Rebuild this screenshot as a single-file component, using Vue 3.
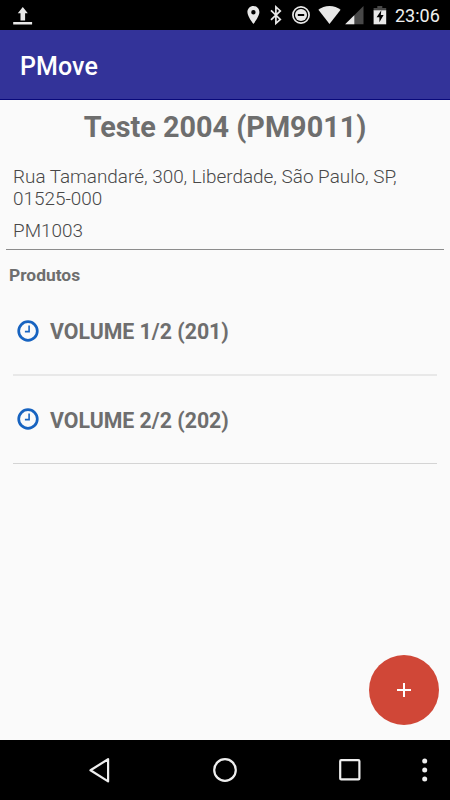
<script setup>
import { ref } from 'vue'

const pedido = {
  titulo: 'Teste 2004 (PM9011)',
  endereco: 'Rua Tamandaré, 300, Liberdade, São Paulo, SP, 01525-000',
  codigo: 'PM1003'
}

const produtos = ref([
  { id: 201, nome: 'VOLUME 1/2 (201)' },
  { id: 202, nome: 'VOLUME 2/2 (202)' }
])
</script>

<template>
  <div class="screen">
    <div class="status">
      <svg class="upload" width="20" height="30" viewBox="0 0 20 30">
        <path d="M9.8 7l5 6.2h-2.7v7.3H7.5v-7.3H4.8z M.2 22h18.9v2.6H.2z" />
      </svg>
      <div class="tray">
        <svg class="pin" width="13" height="30" viewBox="0 0 13 30">
          <path fill-rule="evenodd" d="M6.4 6C3 6 .4 8.7.4 12.1c0 4.6 6 11.9 6 11.9s6-7.3 6-11.9C12.4 8.7 9.8 6 6.4 6zm0 4a2.2 2.2 0 1 1 0 4.4 2.2 2.2 0 0 1 0-4.4z" />
        </svg>
        <svg class="bluetooth" width="12" height="30" viewBox="0 0 12 30">
          <path class="line" d="M1 10.3l9.3 9.1-4.4 4V6.9l4.4 4L1 19.8" />
        </svg>
        <svg class="dnd" width="18" height="30" viewBox="0 0 18 30">
          <circle class="line" cx="9" cy="15" r="8.1" />
          <circle cx="9" cy="15" r="6" />
          <path d="M5.8 14h6.4v2H5.8z" fill="#000" />
        </svg>
        <svg class="wifi" width="23" height="30" viewBox="0 0 23 30">
          <path d="M11.5 24L.4 9.8C3.4 7.4 7.2 6 11.5 6s8.1 1.4 11.1 3.8z" />
        </svg>
        <svg class="signal" width="19" height="30" viewBox="0 0 19 30">
          <path d="M18.5 6v18.3H.2z" fill="#484848" />
          <path d="M9.3 15.2v9.1H.2z" />
        </svg>
        <svg class="battery" width="14" height="30" viewBox="0 0 14 30">
          <path d="M4.3 6h5v2h3.9v3H.6V8h3.7z" fill="#484848" />
          <path d="M.6 10.3h12.6v14H.6z" />
          <path d="M8.3 10.2l-4.7 7h2.8v5.1l4.2-7.4H7.8z" fill="#000" />
        </svg>
        <span class="time">23:06</span>
      </div>
    </div>

    <header class="appbar">PMove</header>

    <main class="content">
      <h1>{{ pedido.titulo }}</h1>
      <div class="info">
        <p class="endereco">{{ pedido.endereco }}</p>
        <p class="codigo">{{ pedido.codigo }}</p>
      </div>
      <h2>Produtos</h2>
      <ul>
        <li v-for="p in produtos" :key="p.id">
          <svg width="22" height="22" viewBox="0 0 22 22">
            <circle class="ring" cx="11" cy="11" r="9.3" />
            <path class="hands" d="M12.1 5.6v6H7.9" />
          </svg>
          <span>{{ p.nome }}</span>
        </li>
      </ul>
      <button class="fab" aria-label="Adicionar">
        <svg width="14" height="14" viewBox="0 0 14 14">
          <path d="M7 0v14M0 7h14" stroke="#fff" stroke-width="2" />
        </svg>
      </button>
    </main>

    <nav class="navbar">
      <svg class="back" width="22" height="60" viewBox="0 0 22 60">
        <path d="M19.1 19.2v22.2L1.5 30.3z" />
      </svg>
      <svg class="home" width="24" height="60" viewBox="0 0 24 60">
        <circle cx="12" cy="30" r="10.8" />
      </svg>
      <svg class="recent" width="22" height="60" viewBox="0 0 22 60">
        <rect x="1.2" y="20.2" width="19.2" height="19.2" rx="1" />
      </svg>
      <svg class="more" width="6" height="60" viewBox="0 0 6 60">
        <circle cx="2.7" cy="21" r="2.5" />
        <circle cx="2.7" cy="30" r="2.5" />
        <circle cx="2.7" cy="39" r="2.5" />
      </svg>
    </nav>
  </div>
</template>

<style>
body {
  margin: 0;
}
</style>

<style scoped>
.screen {
  display: flex;
  flex-direction: column;
  width: 450px;
  height: 800px;
  background: #fafafa;
  color: #6e6e6e;
  font-family: Roboto, 'Noto Sans', sans-serif;
  overflow: hidden;
}

svg {
  display: block;
  flex: none;
}

.status {
  display: flex;
  justify-content: space-between;
  box-sizing: border-box;
  height: 30px;
  padding: 0 10px 0 13px;
  background: #000;
  fill: #e8e8e8;
}

.status .line {
  fill: none;
  stroke: #e8e8e8;
  stroke-width: 1.7;
}

.tray {
  display: flex;
}

.bluetooth { margin-left: 10px; }
.dnd { margin-left: 10px; }
.wifi { margin-left: 8px; }
.signal { margin-left: 4px; }
.battery { margin-left: 9px; }

.time {
  width: 45px;
  margin-left: 8px;
  font-size: 18px;
  line-height: 31px;
  color: #f0f0f0;
  white-space: nowrap;
}

.appbar {
  box-sizing: border-box;
  height: 70px;
  padding-left: 20px;
  border-bottom: 1px solid #09097a;
  background: #333399;
  color: #fff;
  font-size: 25px;
  font-weight: 500;
  line-height: 73px;
  letter-spacing: 0.1px;
}

.content {
  position: relative;
  flex: 1;
}

h1 {
  margin: 0;
  padding-top: 10px;
  font-size: 28.8px;
  font-weight: 700;
  line-height: 34px;
  text-align: center;
}

.info {
  height: 83px;
  margin: 22px 6px 0;
  padding: 0 7px;
  border-bottom: 1px solid #8c8c8c;
  color: #484848;
  font-size: 18.9px;
  font-weight: 300;
  line-height: 22px;
}

.info p {
  margin: 0;
}

.info .codigo {
  margin-top: 10px;
}

h2 {
  margin: 13px 0 1px 9px;
  font-size: 17.4px;
  font-weight: 700;
  line-height: 24px;
}

ul {
  margin: 0 13px;
  padding: 0;
  list-style: none;
}

li {
  display: flex;
  align-items: center;
  box-sizing: border-box;
  height: 88px;
  padding-left: 4px;
  border-bottom: 2px solid #e8e8e8;
  font-size: 21.3px;
  font-weight: 700;
}

li:last-child {
  border-bottom: 1px solid #d4d4d4;
}

li svg {
  margin-bottom: 1px;
}

li span {
  margin-left: 11px;
  padding-top: 1px;
}

.ring {
  fill: none;
  stroke: #1763c0;
  stroke-width: 2.7;
}

.hands {
  fill: none;
  stroke: #1763c0;
  stroke-width: 1.6;
}

.fab {
  position: absolute;
  right: 11px;
  bottom: 15px;
  display: flex;
  align-items: center;
  justify-content: center;
  width: 70px;
  height: 70px;
  padding: 0;
  border: 0;
  border-radius: 50%;
  background: #d04737;
}

.navbar {
  display: flex;
  height: 60px;
  padding-left: 89px;
  background: #000;
  fill: none;
  stroke: #eee;
  stroke-width: 2.2;
  stroke-linejoin: round;
}

.home { margin-left: 102px; }
.recent { margin-left: 102px; }

.more {
  margin-left: 61px;
  fill: #eee;
  stroke: none;
}
</style>
